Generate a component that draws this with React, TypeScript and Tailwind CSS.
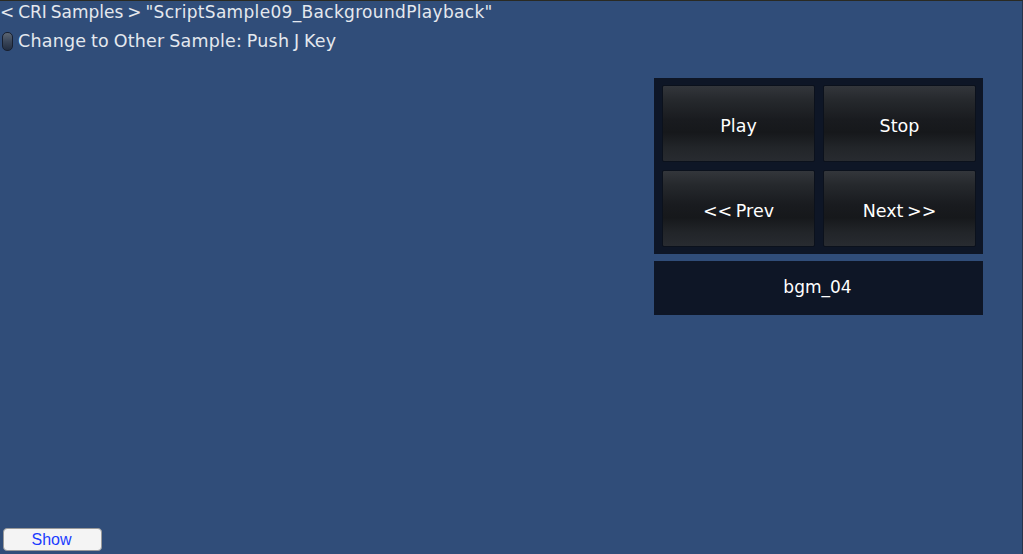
const buttons = ['Play', 'Stop', '<< Prev', 'Next >>']

function SampleButton({ label }: { label: string }) {
  return (
    <button
      type="button"
      className="flex h-[77px] items-center justify-center rounded-[2px] border border-[#0b111c] bg-[linear-gradient(to_bottom,#33363b_0%,#26292d_18%,#191b1f_45%,#16181b_62%,#222529_82%,#282b30_100%)] pt-[6px] text-[17.5px] [word-spacing:-2px] text-white"
    >
      {label}
    </button>
  )
}

export default function App() {
  return (
    <div className="flex h-[554px] w-[1023px] flex-col overflow-hidden border-t border-r border-t-[#2a2a22] border-r-[#27334a] bg-[#304d79] font-['DejaVu_Sans',sans-serif] text-[#e4e8ee]">
      <div className="h-[23px] text-[17px] leading-[23px] whitespace-pre">
        <span className="[word-spacing:-1.5px]">{'< CRI Samples > '}</span>
        <span className="tracking-[0.32px]">{'"ScriptSample09_BackgroundPlayback"'}</span>
      </div>
      <div className="mt-[5px] flex h-[24px] items-center text-[17.5px] tracking-[0.2px] [word-spacing:-1px] whitespace-pre">
        <div className="mr-[5px] ml-[2px] h-[19px] w-[11px] rounded-[5px] border border-[#182030] bg-[linear-gradient(to_bottom,#5c6673,#3a4659_50%,#222d40)]" />
        Change to Other Sample: Push J Key
      </div>

      <div className="mt-[25px] flex flex-1 flex-col items-end pr-[39px]">
        <div className="grid w-[329px] grid-cols-[153px_153px] gap-x-[8px] gap-y-[8px] bg-[#0e1626] py-[7px] pl-[8px]">
          {buttons.map((label) => (
            <SampleButton key={label} label={label} />
          ))}
        </div>
        <div className="mt-[7px] flex h-[54px] w-[329px] items-center justify-center bg-[#0e1626] pr-[2px] text-[17px] text-white">
          bgm_04
        </div>
      </div>

      <div className="pb-[3px] pl-[3px]">
        <button
          type="button"
          className="block h-[23px] w-[99px] rounded-[4px] border border-[#9a9a9a] bg-[#f4f4f4] pr-[2px] font-['Liberation_Sans',sans-serif] text-[16px] leading-[21px] text-[#1a3cff]"
        >
          Show
        </button>
      </div>
    </div>
  )
}
